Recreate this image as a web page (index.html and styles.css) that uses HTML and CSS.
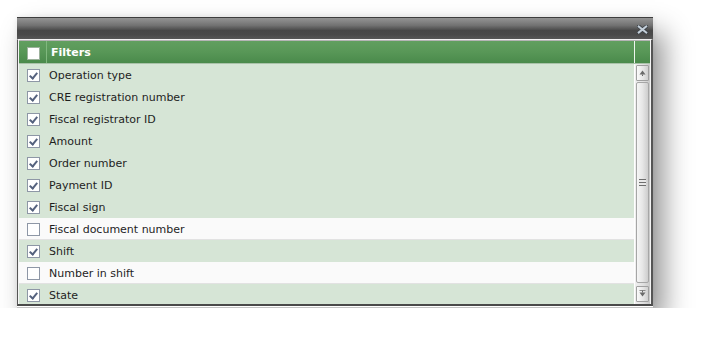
FILE: index.html
```html
<!DOCTYPE html>
<html>
<head>
<meta charset="utf-8">
<link rel="stylesheet" href="styles.css">
</head>
<body>
<div class="window">
  <div class="titlebar">
    <svg class="close" width="11" height="9" viewBox="0 0 11 9">
      <path d="M1.8 1.5 L9.2 7.5 M9.2 1.5 L1.8 7.5" stroke="#3a3f44" stroke-width="3.6" stroke-linecap="square"/>
      <path d="M1.8 1.5 L9.2 7.5 M9.2 1.5 L1.8 7.5" stroke="#c3ced8" stroke-width="2.1" stroke-linecap="square"/>
    </svg>
  </div>
  <div class="body">
    <div class="grid">
      <div class="header">
        <div class="hcell-check"><span class="box"></span></div>
        <div class="hcell-title">Filters</div>
        <div class="hcell-scroll"></div>
      </div>
      <div class="main">
        <div class="list">
          <div class="row on"><span class="box checked"></span><span class="label">Operation type</span></div>
          <div class="row on"><span class="box checked"></span><span class="label">CRE registration number</span></div>
          <div class="row on"><span class="box checked"></span><span class="label">Fiscal registrator ID</span></div>
          <div class="row on"><span class="box checked"></span><span class="label">Amount</span></div>
          <div class="row on"><span class="box checked"></span><span class="label">Order number</span></div>
          <div class="row on"><span class="box checked"></span><span class="label">Payment ID</span></div>
          <div class="row on"><span class="box checked"></span><span class="label">Fiscal sign</span></div>
          <div class="row off"><span class="box"></span><span class="label">Fiscal document number</span></div>
          <div class="row on"><span class="box checked"></span><span class="label">Shift</span></div>
          <div class="row off"><span class="box"></span><span class="label">Number in shift</span></div>
          <div class="row on"><span class="box checked"></span><span class="label">State</span></div>
        </div>
        <div class="scrollbar">
          <div class="sbtn up"><svg width="7" height="6" viewBox="0 0 7 6"><path d="M3.5 0.5 L6.5 4.5 L0.5 4.5 Z" fill="#6a6a6a"/><rect x="3" y="4.5" width="1" height="1.5" fill="#6a6a6a"/></svg></div>
          <div class="thumb"><span class="grip"></span></div>
          <div class="sbtn down"><svg width="7" height="8" viewBox="0 0 7 8"><rect x="0.5" y="0" width="6" height="1" fill="#8a8a8a"/><path d="M0.5 2.5 L6.5 2.5 L3.5 6.5 Z" fill="#6a6a6a"/><rect x="3" y="0.5" width="1" height="2" fill="#6a6a6a"/></svg></div>
        </div>
      </div>
    </div>
  </div>
  <div class="foot"></div>
</div>
</body>
</html>
```
FILE: styles.css
```css
html, body {
  margin: 0;
  padding: 0;
  background: #ffffff;
}
body {
  padding: 17px 0 0 17px;
  font-family: "DejaVu Sans", Verdana, sans-serif;
}
.window {
  width: 636px;
  background: #f4f4f4;
  box-shadow: 11px 15px 26px rgba(0, 0, 0, 0.42), 0 0 6px rgba(0, 0, 0, 0.08);
}
.titlebar {
  height: 21px;
  border-top: 1px solid #3e3e3e;
  background: linear-gradient(to bottom, #949494 0%, #727272 35%, #474747 60%, #4a4a4a 80%, #575757 100%);
  display: flex;
  align-items: center;
  justify-content: flex-end;
  padding-right: 5px;
}
.close {
  display: block;
  margin-top: 1px;
}
.body {
  border-top: 1px solid #f2f2f2;
  border-left: 1px solid #555555;
  border-right: 2px solid #555555;
  border-bottom: 2px solid #4a4a4a;
  padding: 0 1px 0 1px;
  background: #f4f4f4;
}
.grid {
  border-top: 1px solid #b4b4b4;
  background: #d6e5d6;
}
.header {
  display: flex;
  height: 22px;
  background: linear-gradient(to bottom, #619f5f 0%, #589757 50%, #4a8a4b 100%);
  border-bottom: 1px solid #a9c2a9;
}
.hcell-check {
  width: 28px;
  display: flex;
  align-items: center;
  padding: 2px 0 0 8px;
  box-sizing: border-box;
  border-right: 1px solid #80b87e;
}
.hcell-check .box {
  border-color: #9cb29c;
}
.hcell-title {
  flex: 1;
  color: #ffffff;
  font-weight: bold;
  font-size: 11px;
  line-height: 22px;
  padding: 1px 0 0 4px;
  box-sizing: border-box;
}
.hcell-scroll {
  width: 15px;
  border-left: 1px solid #eef5ee;
}
.main {
  display: flex;
  height: 240px;
  overflow: hidden;
}
.list {
  flex: 1;
}
.row {
  height: 22px;
  display: flex;
  align-items: center;
  padding-left: 8px;
  box-sizing: border-box;
}
.row.on {
  background: #d6e5d6;
}
.row.off {
  background: #fafafa;
  box-shadow: inset 0 -1px 0 #e2e2e2;
}
.box {
  display: block;
  width: 11px;
  height: 11px;
  border: 1px solid #8e97a6;
  background: #ffffff;
  position: relative;
  flex: none;
}
.box.checked::after {
  content: "";
  position: absolute;
  left: 3px;
  top: 1px;
  width: 3px;
  height: 6px;
  border-right: 2px solid #55627e;
  border-bottom: 2px solid #55627e;
  transform: rotate(40deg);
}
.label {
  font-size: 11px;
  color: #1e1e1e;
  padding-left: 9px;
}
.scrollbar {
  width: 16px;
  border-left: 1px solid #ffffff;
  box-sizing: border-box;
  background: linear-gradient(to right, #f0f0f0, #dedede 60%, #c8c8c8);
  display: flex;
  flex-direction: column;
  padding: 1px 1px 2px 1px;
  gap: 1px;
}
.sbtn {
  height: 14px;
  border: 1px solid #a0a0a0;
  border-radius: 1px;
  background: linear-gradient(to right, #fafafa, #e4e4e4 60%, #cfcfcf);
  display: flex;
  align-items: center;
  justify-content: center;
  flex: none;
}
.sbtn.down {
  margin-top: 2px;
}
.thumb {
  flex: 1;
  border: 1px solid #a6a6a6;
  border-radius: 2px;
  background: linear-gradient(to right, #f6f6f6, #e6e6e6 50%, #cdcdcd);
  display: flex;
  align-items: center;
  justify-content: center;
}
.grip {
  display: block;
  width: 7px;
  height: 7px;
  background: repeating-linear-gradient(to bottom, #6e6e6e 0, #6e6e6e 1px, #e8e8e8 1px, #e8e8e8 3px);
}
.foot {
  height: 1px;
  background: #ffffff;
  border-bottom: 1px solid #c4c4c4;
}
```
